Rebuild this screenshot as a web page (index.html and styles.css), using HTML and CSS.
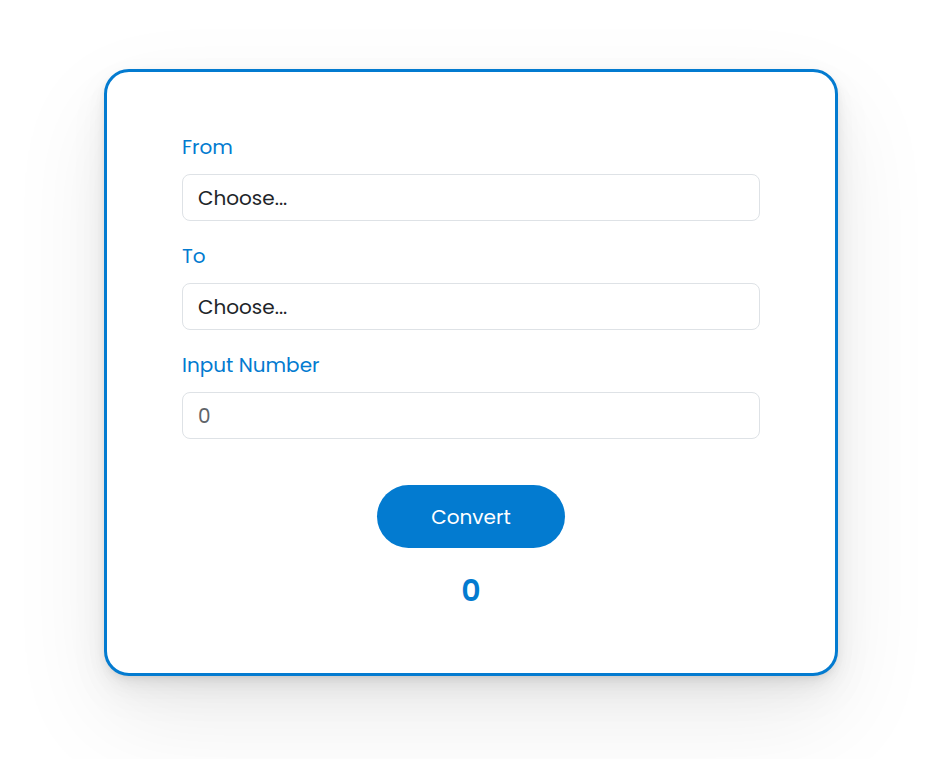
FILE: index.html
```html
<!DOCTYPE html>
<html lang="en">
<head>
<meta charset="utf-8">
<meta name="viewport" content="width=device-width, initial-scale=1">
<title>Number Converter</title>
<link rel="stylesheet" href="styles.css">
</head>
<body>
<main class="page">
  <form class="card">
    <div class="field">
      <label class="label" for="from">From</label>
      <select class="control" id="from"><option>Choose...</option></select>
    </div>
    <div class="field">
      <label class="label" for="to">To</label>
      <select class="control" id="to"><option>Choose...</option></select>
    </div>
    <div class="field">
      <label class="label" for="number">Input Number</label>
      <input class="control" id="number" type="text" placeholder="0">
    </div>
    <button class="convert" type="button">Convert</button>
    <output class="result" for="from to number">0</output>
  </form>
</main>
</body>
</html>
```

FILE: styles.css
```css
*, *::before, *::after { box-sizing: border-box; }

body {
  margin: 0;
  background: #fff;
  color: #212529;
  font-family: Poppins, "Open Sans", "Liberation Sans", sans-serif;
  font-size: 20px;
  line-height: 30px;
}

.page {
  padding: 69px 107px 83px 104px;
}

.card {
  display: flex;
  flex-direction: column;
  padding: 60px 75px;
  border: 3px solid #037bd0;
  border-radius: 25px;
  background: #fff;
  box-shadow:
    0 1px 2px rgba(0, 0, 0, 0.02),
    0 3px 6px rgba(0, 0, 0, 0.03),
    0 5px 12px rgba(0, 0, 0, 0.04),
    0 9px 22px rgba(0, 0, 0, 0.04),
    0 17px 40px rgba(0, 0, 0, 0.05),
    0 40px 100px rgba(0, 0, 0, 0.08);
}

.field {
  display: flex;
  flex-direction: column;
  gap: 12px;
  margin-bottom: 20px;
}

.label { color: #037bd0; }

.control {
  width: 100%;
  height: 47px;
  margin: 0;
  padding: 0 15px;
  border: 1px solid #dee2e6;
  border-radius: 8px;
  background: #fff;
  color: #212529;
  font: inherit;
  appearance: none;
}

.control::placeholder {
  color: #5f6469;
  opacity: 1;
}

.convert {
  align-self: center;
  width: 188px;
  height: 63px;
  margin: 26px 0 20px;
  border: 0;
  border-radius: 32px;
  background: #037bd0;
  color: #fff;
  font: inherit;
}

.result {
  align-self: center;
  color: #037bd0;
  font-size: 30px;
  font-weight: 600;
  line-height: 45px;
}
```
